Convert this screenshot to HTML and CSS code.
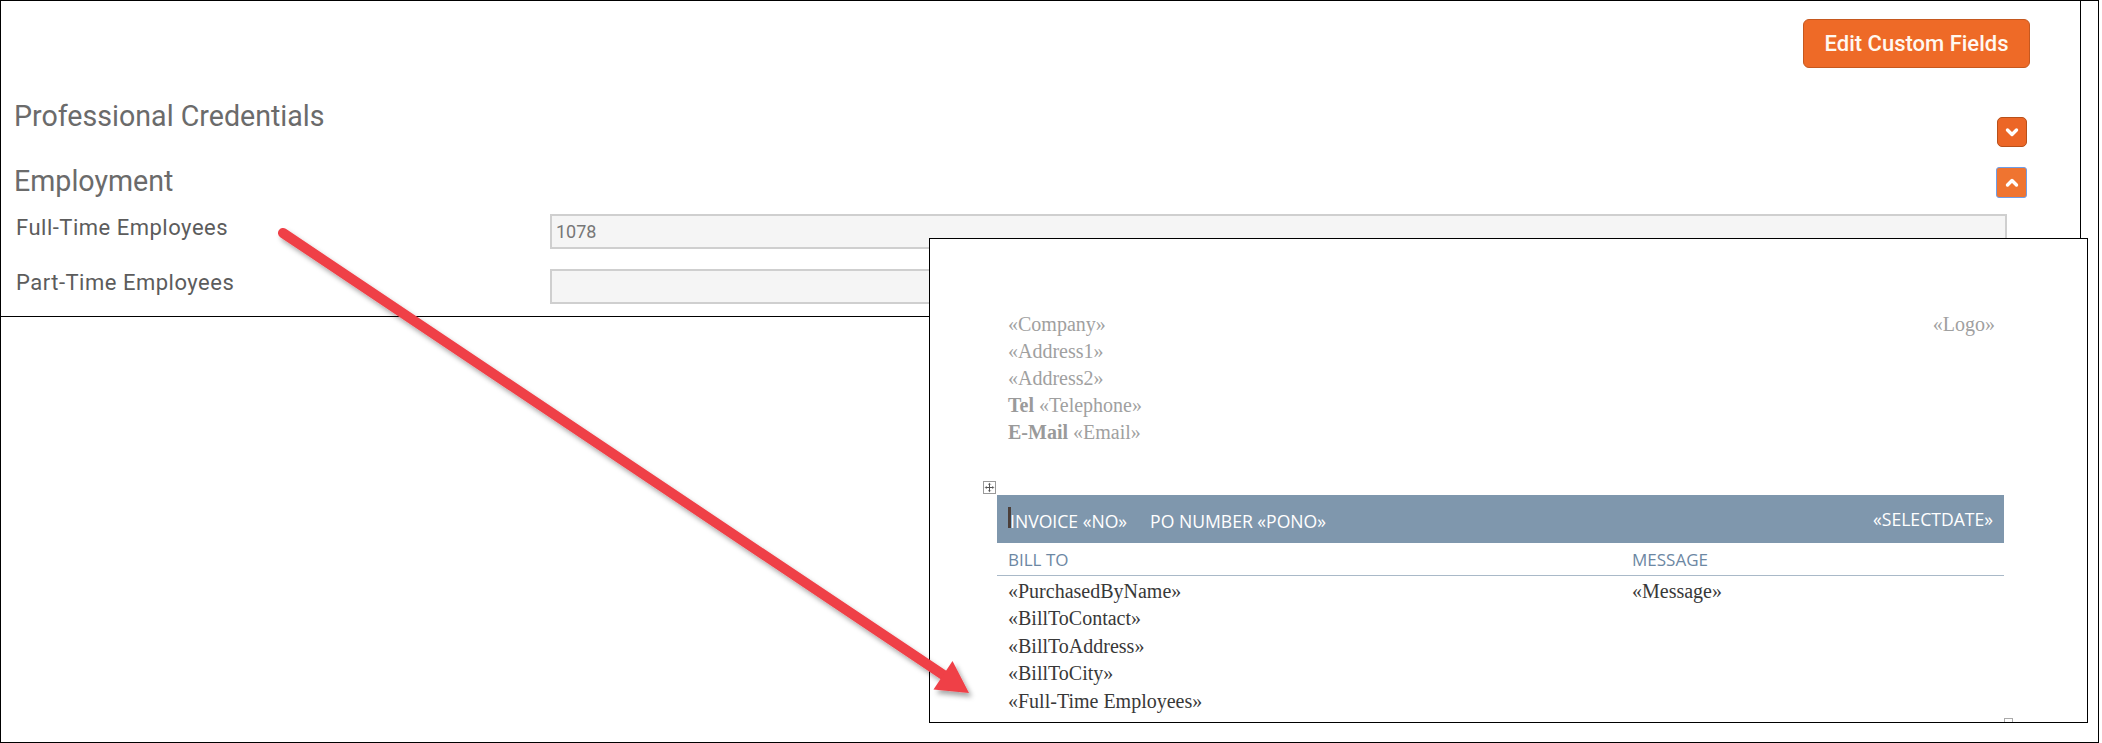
FILE: index.html
```html
<!DOCTYPE html>
<html>
<head>
<meta charset="utf-8">
<title>Custom Fields</title>
<link rel="stylesheet" href="styles.css">
</head>
<body>
<div class="frame">
  <section class="panel">
    <div class="toolbar">
      <button class="btn-edit">Edit Custom Fields</button>
    </div>
    <div class="section-head sh-prof">
      <h2>Professional Credentials</h2>
      <button class="toggle toggle-down" aria-label="Expand">
        <svg viewBox="0 0 28 28" width="28" height="28"><polyline points="9.5,12 14,16.5 18.5,12" /></svg>
      </button>
    </div>
    <div class="section-head sh-emp">
      <h2>Employment</h2>
      <button class="toggle toggle-up" aria-label="Collapse">
        <svg viewBox="0 0 28 29" width="28" height="29"><polyline points="9.5,17 14,12.5 18.5,17" /></svg>
      </button>
    </div>
    <div class="field field-first">
      <label>Full-Time Employees</label>
      <div class="input">1078</div>
    </div>
    <div class="field field-second">
      <label>Part-Time Employees</label>
      <div class="input"></div>
    </div>
  </section>

  <div class="doc">
    <div class="doc-body">
      <div class="doc-header">
        <div class="company">
          <div>«Company»</div>
          <div>«Address1»</div>
          <div>«Address2»</div>
          <div><b>Tel</b> «Telephone»</div>
          <div><b>E-Mail</b> «Email»</div>
        </div>
        <div class="logo">«Logo»</div>
      </div>
      <div class="invoice-table">
        <span class="move-handle">
          <svg viewBox="0 0 13 13" width="13" height="13">
            <rect x="0.5" y="0.5" width="12" height="12" fill="#fff" stroke="#9a9a9a"/>
            <path d="M6.5 2.5v8M2.5 6.5h8" stroke="#555" stroke-width="1" fill="none"/>
            <path d="M5.2 3.6L6.5 2.3 7.8 3.6M5.2 9.4L6.5 10.7 7.8 9.4M3.6 5.2L2.3 6.5 3.6 7.8M9.4 5.2L10.7 6.5 9.4 7.8" stroke="#555" stroke-width="0.8" fill="none"/>
          </svg>
        </span>
        <div class="bar">
          <div class="bar-left"><span class="caret"></span>INVOICE «NO»<span class="po">PO NUMBER «PONO»</span></div>
          <div class="bar-right">«SELECTDATE»</div>
        </div>
        <div class="cols col-heads">
          <div class="cell">BILL TO</div>
          <div class="cell">MESSAGE</div>
        </div>
        <div class="cols col-data">
          <div class="cell">
            <div>«PurchasedByName»</div>
            <div>«BillToContact»</div>
            <div>«BillToAddress»</div>
            <div>«BillToCity»</div>
            <div>«Full-Time Employees»</div>
          </div>
          <div class="cell">
            <div>«Message»</div>
          </div>
        </div>
      </div>
    </div>
    <span class="resize-handle"></span>
  </div>

  <svg class="arrow" width="2097" height="741" viewBox="0 0 2097 741">
    <defs>
      <filter id="shadow" x="-10%" y="-10%" width="120%" height="130%">
        <feDropShadow dx="3" dy="4" stdDeviation="2.5" flood-color="#000" flood-opacity="0.35"/>
      </filter>
    </defs>
    <g filter="url(#shadow)">
      <line x1="282" y1="232" x2="944" y2="675" stroke="#ef3f47" stroke-width="10" stroke-linecap="round"/>
      <polygon points="968,692 932.5,688.5 951.5,660" fill="#ef3f47"/>
    </g>
  </svg>
</div>
</body>
</html>
```

FILE: styles.css
```css
html, body {
  margin: 0;
  padding: 0;
  background: #fff;
}

body {
  width: 2102px;
  height: 743px;
  overflow: hidden;
  font-family: Roboto, "Liberation Sans", sans-serif;
}

.frame {
  position: relative;
  box-sizing: border-box;
  width: 2099px;
  height: 743px;
  border: 1px solid #000;
}

/* ---------- top panel ---------- */
.panel {
  box-sizing: border-box;
  width: 2080px;
  height: 316px;
  border-right: 1px solid #000;
  border-bottom: 1px solid #000;
  padding: 0 50px 0 13px;
  display: flex;
  flex-direction: column;
}

.toolbar {
  display: flex;
  justify-content: flex-end;
  padding-top: 18px;
}

.btn-edit {
  box-sizing: border-box;
  width: 227px;
  height: 49px;
  padding: 0;
  background: #ee6a27;
  border: 1px solid #c5581f;
  border-radius: 6px;
  color: #fff8f0;
  font-family: Roboto, "Liberation Sans", sans-serif;
  font-size: 22px;
  font-weight: 500;
}

.section-head {
  display: flex;
  justify-content: space-between;
  align-items: flex-start;
}

.section-head h2 {
  margin: 0;
  font-size: 28.6px;
  line-height: 34px;
  font-weight: 400;
  color: #6b6b6b;
}

.sh-prof {
  margin-top: 31px;
}

.sh-emp {
  margin-top: 17px;
}

.toggle {
  box-sizing: border-box;
  padding: 0;
  margin-right: 3px;
  display: flex;
  align-items: center;
  justify-content: center;
}

.toggle svg polyline {
  fill: none;
  stroke: #fff;
  stroke-width: 3.4;
  stroke-linecap: round;
  stroke-linejoin: round;
}

.toggle-down {
  width: 30px;
  height: 30px;
  margin-top: 18px;
  background: #ec6626;
  border: 1px solid #b8501a;
  border-radius: 5px;
}

.toggle-up {
  width: 31px;
  height: 31px;
  margin-top: 3px;
  background: #ef7430;
  border: 1px solid #6f9de6;
  border-radius: 3px;
}

.field {
  display: flex;
  align-items: flex-start;
}

.field-first {
  margin-top: 16px;
}

.field-second {
  margin-top: 20px;
}

.field label {
  flex: 0 0 536px;
  box-sizing: border-box;
  padding: 1px 0 0 2px;
  font-size: 22px;
  letter-spacing: 0.5px;
  color: #5c5c5c;
}

.input {
  box-sizing: border-box;
  width: 1457px;
  height: 35px;
  border: 2px solid #cfcfcf;
  background: #f5f5f5;
  padding-left: 4px;
  font-size: 18px;
  line-height: 31px;
  color: #777;
}

/* ---------- document window ---------- */
.doc {
  position: absolute;
  left: 928px;
  top: 237px;
  box-sizing: border-box;
  width: 1159px;
  height: 485px;
  border: 1px solid #000;
  background: #fff;
  padding: 72px 0 0 67px;
  overflow: hidden;
}

.doc-body {
  width: 1007px;
}

.doc-header {
  display: flex;
  justify-content: space-between;
  padding: 0 9px 0 11px;
  font-family: "Liberation Serif", "Times New Roman", serif;
  font-size: 20px;
  line-height: 27px;
  color: #a0a0a0;
}

.doc-header b {
  font-weight: 700;
  color: #9a9a9a;
}

.invoice-table {
  position: relative;
  margin-top: 49px;
}

.move-handle {
  position: absolute;
  left: -14px;
  top: -14px;
  width: 13px;
  height: 13px;
  display: block;
}

.move-handle svg {
  display: block;
}

.bar {
  box-sizing: border-box;
  height: 48px;
  background: #7f97ad;
  display: flex;
  justify-content: space-between;
  align-items: flex-start;
  padding: 12px 11px 0 13px;
  font-family: "Open Sans", "Liberation Sans", sans-serif;
  font-size: 17.6px;
  line-height: 24px;
  color: #fff;
}

.caret {
  display: inline-block;
  width: 3px;
  height: 21px;
  margin-left: -2px;
  margin-right: -1px;
  background: #4b3f3a;
  vertical-align: baseline;
}

.po {
  margin-left: 23px;
}

.cols {
  display: grid;
  grid-template-columns: 624px 1fr;
}

.cell {
  padding-left: 11px;
}

.col-heads {
  padding: 5px 0 4px;
  border-bottom: 1.5px solid #a9b9c8;
  font-family: "Open Sans", "Liberation Sans", sans-serif;
  font-size: 17px;
  line-height: 23px;
  color: #6c87a3;
}

.col-data {
  padding-top: 2px;
  font-family: "Liberation Serif", "Times New Roman", serif;
  font-size: 20px;
  line-height: 27.4px;
  color: #383838;
}

.resize-handle {
  position: absolute;
  left: 1074px;
  top: 479px;
  box-sizing: border-box;
  width: 9px;
  height: 6px;
  border: 1px solid #aaa;
  border-bottom: none;
}

/* ---------- annotation arrow ---------- */
.arrow {
  position: absolute;
  left: 0;
  top: 0;
  pointer-events: none;
}
```
